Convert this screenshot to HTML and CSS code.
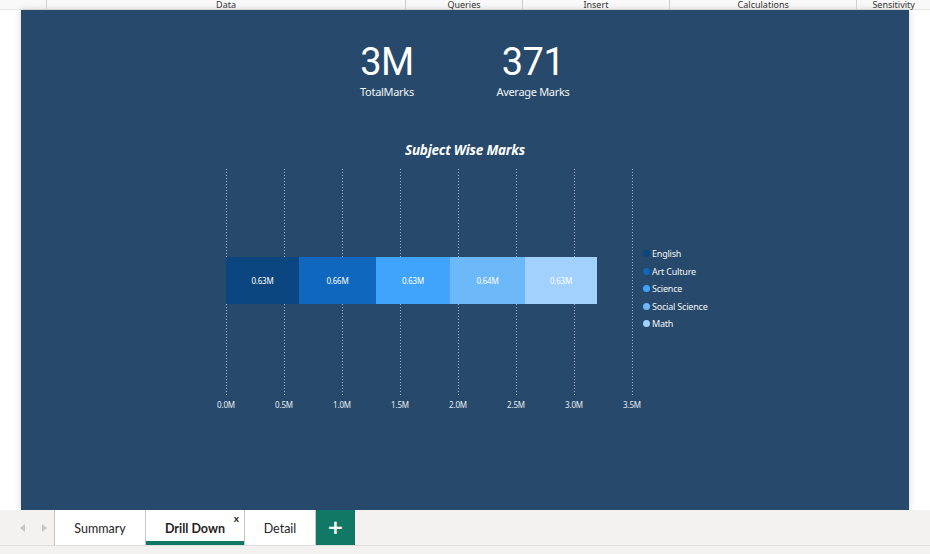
FILE: index.html
```html
<!DOCTYPE html>
<html lang="en">
<head>
<meta charset="utf-8">
<title>Drill Down</title>
<link rel="stylesheet" href="styles.css">
</head>
<body>
<div class="ribbon">
  <div class="rib-sec rib-first"></div>
  <div class="rib-sec rib-data">Data</div>
  <div class="rib-sec rib-queries">Queries</div>
  <div class="rib-sec rib-insert">Insert</div>
  <div class="rib-sec rib-calc">Calculations</div>
  <div class="rib-sec rib-sens">Sensitivity</div>
</div>
<div class="workspace">
  <div class="canvas">
    <div class="kpis">
      <div class="kpi">
        <div class="kpi-value">3M</div>
        <div class="kpi-label">TotalMarks</div>
      </div>
      <div class="kpi">
        <div class="kpi-value">371</div>
        <div class="kpi-label">Average Marks</div>
      </div>
    </div>
    <div class="chart-title">Subject Wise Marks</div>
    <div class="chart-row">
      <div class="chart-col">
        <div class="plot">
          <div class="grid">
            <div class="gcell"></div><div class="gcell"></div><div class="gcell"></div><div class="gcell"></div><div class="gcell"></div><div class="gcell"></div><div class="gcell last"></div>
          </div>
          <div class="bar">
            <div class="seg c1" style="width:73px">0.63M</div>
            <div class="seg c2" style="width:77px">0.66M</div>
            <div class="seg c3" style="width:74px">0.63M</div>
            <div class="seg c4" style="width:75px">0.64M</div>
            <div class="seg c5" style="width:72px">0.63M</div>
          </div>
        </div>
        <div class="axis">
          <span>0.0M</span><span>0.5M</span><span>1.0M</span><span>1.5M</span><span>2.0M</span><span>2.5M</span><span>3.0M</span><span>3.5M</span>
        </div>
      </div>
      <ul class="legend">
        <li><i class="dot c1"></i>English</li>
        <li><i class="dot c2"></i>Art Culture</li>
        <li><i class="dot c3"></i>Science</li>
        <li><i class="dot c4"></i>Social Science</li>
        <li><i class="dot c5"></i>Math</li>
      </ul>
    </div>
  </div>
</div>
<div class="tabbar">
  <div class="nav">
    <span class="arrow arrow-left"></span>
    <span class="arrow arrow-right"></span>
  </div>
  <div class="tab">Summary</div>
  <div class="tab active">Drill Down<span class="close">x</span></div>
  <div class="tab tab-last">Detail</div>
  <div class="tab-add">+</div>
</div>
<div class="statusbar"></div>
</body>
</html>
```

FILE: styles.css
```css
* { box-sizing: border-box; }
html, body { margin: 0; padding: 0; }
body {
  width: 930px;
  height: 554px;
  overflow: hidden;
  background: #ffffff;
  font-family: Lato, "Noto Sans", sans-serif;
}

/* ribbon */
.ribbon {
  display: flex;
  height: 10px;
  background: #f9f9f9;
  border-bottom: 1px solid #e6e6e6;
  font-family: "Noto Sans", sans-serif;
  font-size: 9px;
  line-height: 9px;
  color: #333;
}
.rib-sec {
  text-align: center;
  border-left: 1px solid #cfcfcf;
  height: 9px;
  white-space: nowrap;
}
.rib-first { width: 46px; border-left: none; }
.rib-data { width: 361px; }
.rib-queries { width: 117px; }
.rib-insert { width: 148px; }
.rib-calc { width: 188px; }
.rib-sens { width: 74px; }

/* workspace */
.workspace {
  height: 500px;
  padding-left: 21px;
  background: #ffffff;
}
.canvas {
  width: 888px;
  height: 500px;
  background: #27496b;
  box-shadow: 0 0 7px rgba(0,0,0,0.18);
  color: #ffffff;
  padding-top: 33px;
}

.kpis {
  display: flex;
  padding-left: 306px;
  gap: 26px;
}
.kpi {
  width: 120px;
  text-align: center;
}
.kpi-value {
  font-family: Roboto, sans-serif;
  font-size: 38px;
  line-height: 38px;
  font-weight: 400;
  letter-spacing: -0.5px;
}
.kpi-label {
  margin-top: 4px;
  font-family: "Noto Sans", sans-serif;
  font-size: 11px;
  line-height: 14px;
  letter-spacing: -0.3px;
  color: #f2f4f7;
}

.chart-title {
  margin-top: 42px;
  text-align: center;
  font-family: "Noto Sans", sans-serif;
  font-size: 13.5px;
  line-height: 18px;
  font-weight: 700;
  font-style: italic;
  letter-spacing: -0.2px;
}

.chart-row {
  display: flex;
  margin-top: 10px;
  padding-left: 205px;
}
.chart-col {
  width: 407px;
  flex-shrink: 0;
}
.plot {
  position: relative;
  width: 407px;
  height: 228px;
  padding-top: 88px;
}
.grid {
  position: absolute;
  inset: 0;
  display: flex;
}
.gcell {
  width: 58px;
  height: 100%;
  background-image: linear-gradient(to bottom, rgba(205,215,228,0.75) 1px, transparent 1px);
  background-size: 1px 3px;
  background-repeat: repeat-y;
  background-position: left top;
}
.gcell.last {
  width: 59px;
  background-image:
    linear-gradient(to bottom, rgba(205,215,228,0.75) 1px, transparent 1px),
    linear-gradient(to bottom, rgba(205,215,228,0.75) 1px, transparent 1px);
  background-size: 1px 3px, 1px 3px;
  background-repeat: repeat-y, repeat-y;
  background-position: left top, right top;
}
.bar {
  position: relative;
  display: flex;
  height: 47px;
}
.seg {
  display: flex;
  align-items: center;
  justify-content: center;
  font-family: "Noto Sans", sans-serif;
  font-size: 8px;
  letter-spacing: -0.2px;
  color: #ffffff;
}
.c1 { background: #0b4680; }
.c2 { background: #0f68bd; }
.c3 { background: #40a4fc; }
.c4 { background: #6db8f8; }
.c5 { background: #a2d1fe; }

.axis {
  display: flex;
  margin-left: -29px;
  margin-top: 3px;
  width: 464px;
}
.axis span {
  flex-shrink: 0;
  width: 58px;
  text-align: center;
  font-family: "Noto Sans", sans-serif;
  font-size: 8px;
  line-height: 10px;
  letter-spacing: -0.2px;
  color: #e6ebf1;
}

.legend {
  list-style: none;
  margin: 0 0 0 10px;
  padding: 76px 0 0 0;
}
.legend li {
  display: flex;
  align-items: center;
  height: 17.5px;
  font-family: "Noto Sans", sans-serif;
  font-size: 9px;
  letter-spacing: -0.2px;
  color: #f2f4f7;
}
.dot {
  width: 7px;
  height: 7px;
  border-radius: 50%;
  margin-right: 2px;
}

/* tabs */
.tabbar {
  display: flex;
  height: 35px;
  background: #f3f2f1;
}
.nav {
  width: 54px;
  position: relative;
}
.arrow {
  position: absolute;
  top: 14px;
  width: 0;
  height: 0;
  border-top: 4px solid transparent;
  border-bottom: 4px solid transparent;
}
.arrow-left { left: 20px; border-right: 5px solid #c8c6c4; }
.arrow-right { left: 42px; border-left: 5px solid #c8c6c4; }
.tab {
  position: relative;
  display: flex;
  align-items: center;
  justify-content: center;
  padding-top: 2px;
  background: #ffffff;
  border-left: 1px solid #c8c6c4;
  font-size: 12.5px;
  color: #252423;
}
.tab:nth-child(2) { width: 91px; }
.tab.active {
  width: 99px;
  font-weight: 700;
  box-shadow: inset 0 -4px 0 #117865;
}
.tab.tab-last {
  width: 72px;
  border-right: 1px solid #c8c6c4;
}
.close {
  position: absolute;
  top: 3px;
  right: 5px;
  font-size: 10px;
  line-height: 10px;
  font-weight: 700;
  color: #252423;
}
.tab-add {
  width: 39px;
  display: flex;
  align-items: center;
  justify-content: center;
  background: #117865;
  color: #ffffff;
  font-family: "DejaVu Sans", sans-serif;
  font-size: 20px;
  font-weight: 700;
  line-height: 20px;
  padding-bottom: 2px;
}
.statusbar {
  height: 9px;
  background: #f3f2f1;
  border-top: 1px solid #e1dfdd;
}
```
